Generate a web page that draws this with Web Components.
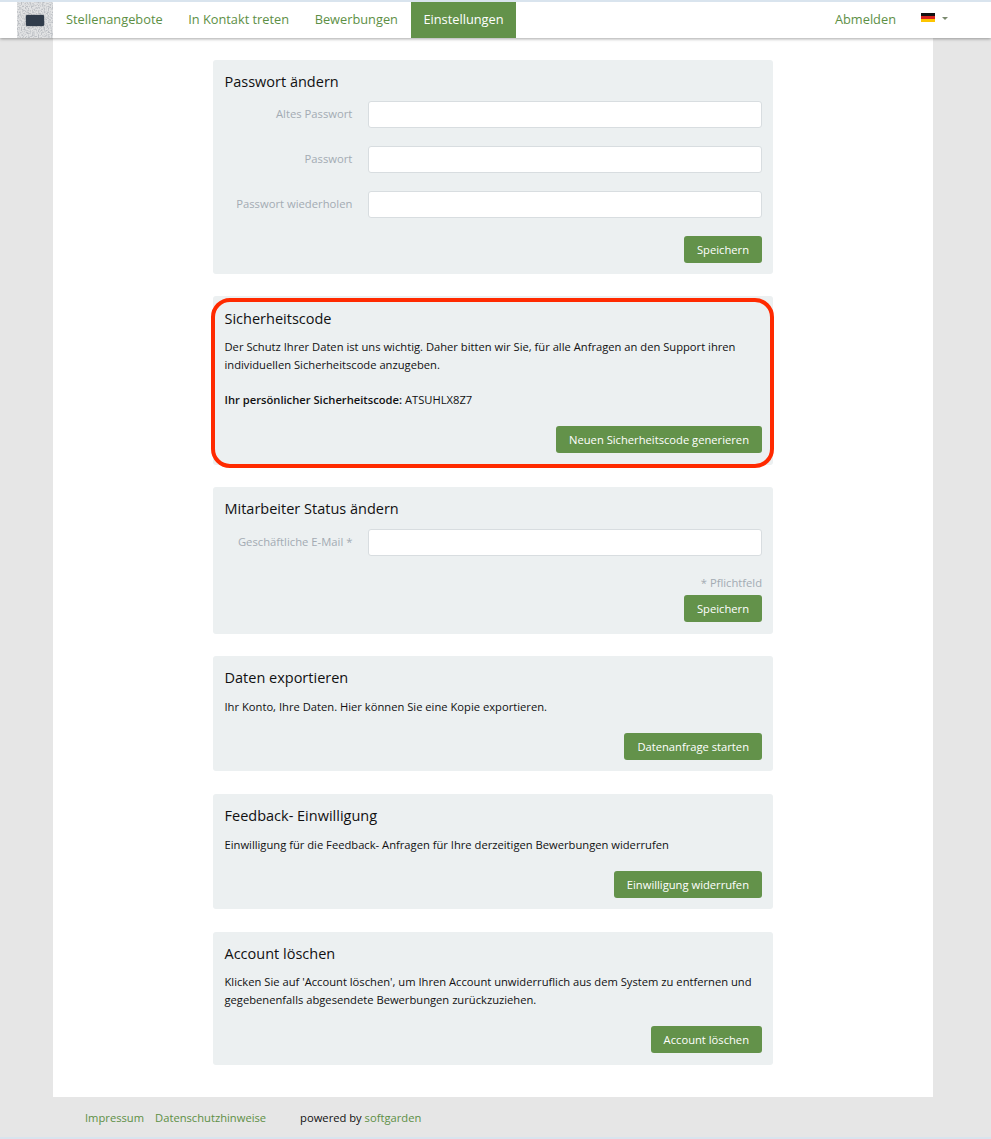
<!DOCTYPE html>
<html lang="de">
<head>
<meta charset="utf-8">
<title>Einstellungen</title>
<style>
  html, body { margin: 0; padding: 0; }
  body { background: #e6e6e6; font-family: "Open Sans", sans-serif; font-size: 11px; color: #111; }
</style>
</head>
<body>
<sg-app>
  <sg-header slot="header"></sg-header>

  <sg-card title="Passwort ändern" style="height:214px;padding-bottom:11px">
    <sg-field label="Altes Passwort"></sg-field>
    <sg-field label="Passwort"></sg-field>
    <sg-field label="Passwort wiederholen"></sg-field>
    <sg-button slot="action">Speichern</sg-button>
  </sg-card>

  <sg-card title="Sicherheitscode" highlight style="height:169px;--title-shift:1px">
    <p>Der Schutz Ihrer Daten ist uns wichtig. Daher bitten wir Sie, für alle Anfragen an den Support ihren individuellen Sicherheitscode anzugeben.</p>
    <p style="margin-top:17px"><b>Ihr persönlicher Sicherheitscode:</b> ATSUHLX8Z7</p>
    <sg-button slot="action">Neuen Sicherheitscode generieren</sg-button>
  </sg-card>

  <sg-card title="Mitarbeiter Status ändern" style="height:147px">
    <sg-field label="Geschäftliche E-Mail *" style="margin-top:1px"></sg-field>
    <sg-button slot="action" note="* Pflichtfeld">Speichern</sg-button>
  </sg-card>

  <sg-card title="Daten exportieren" style="height:115px;padding-bottom:11px">
    <p>Ihr Konto, Ihre Daten. Hier können Sie eine Kopie exportieren.</p>
    <sg-button slot="action">Datenanfrage starten</sg-button>
  </sg-card>

  <sg-card title="Feedback- Einwilligung" style="height:115px;margin-top:1px;padding-bottom:11px">
    <p>Einwilligung für die Feedback- Anfragen für Ihre derzeitigen Bewerbungen widerrufen</p>
    <sg-button slot="action">Einwilligung widerrufen</sg-button>
  </sg-card>

  <sg-card title="Account löschen" style="height:133px;margin-top:1px">
    <p style="top:0">Klicken Sie auf 'Account löschen', um Ihren Account unwiderruflich aus dem System zu entfernen und gegebenenfalls abgesendete Bewerbungen zurückzuziehen.</p>
    <sg-button slot="action">Account löschen</sg-button>
  </sg-card>

  <sg-footer slot="footer"></sg-footer>
</sg-app>

<script>
const Colors = {
    green: '#63924a',
    link: '#5d8f45',
    card: '#ecf0f1',
    page: '#e6e6e6',
    stripe: '#d9e4ee',
    label: '#a3abb3',
};

class App extends HTMLElement {
    constructor() {
        super();
        this.attachShadow({ mode: 'open' }).innerHTML = `
          <style>
            :host { display: flex; flex-direction: column; min-height: 1139px; background: ${Colors.page}; }
            main {
              width: 880px; margin-left: 53px; background: #fff; box-sizing: border-box;
              padding: 22px 160px 32px; display: flex; flex-direction: column; gap: 22px;
            }
          </style>
          <slot name="header"></slot>
          <main><slot></slot></main>
          <slot name="footer"></slot>
        `;
    }
}

class Header extends HTMLElement {
    constructor() {
        super();
        this.attachShadow({ mode: 'open' }).innerHTML = `
          <style>
            :host {
              display: flex; height: 36px; background: #fff; border-top: 2px solid ${Colors.stripe};
              box-shadow: 0 1px 3px rgba(0,0,0,.35); position: relative; z-index: 2;
              padding-left: 17px; font-size: 12.8px;
            }
            .logo {
              width: 36px; height: 36px; display: flex; align-items: center; justify-content: center;
              position: relative; background: #e2e3e4; overflow: hidden;
            }
            .logo svg { position: absolute; inset: 0; }
            .chip {
              position: relative; width: 18px; height: 11px; background: #303c4b; border-radius: 1px;
              box-shadow: 0 0 2px rgba(40,50,60,.6);
            }
            nav { display: flex; flex: 1; margin-left: 0.25px; }
            a { color: ${Colors.link}; text-decoration: none; padding: 0 12.75px; line-height: 35px; display: block; }
            a.active { background: ${Colors.green}; color: #fff; }
            .right { display: flex; align-items: flex-start; }
            .logout { padding: 0; margin-right: 25px; }
            .flag { display: block; width: 14px; height: 9px; margin-top: 11px; }
            .caret {
              width: 0; height: 0; margin: 15px 43px 0 7px;
              border-top: 3px solid #7a8a6e; border-left: 3px solid transparent; border-right: 3px solid transparent;
            }
          </style>
          <div class="logo">
            <svg width="36" height="36" aria-hidden="true">
              <filter id="grain" x="0" y="0" width="100%" height="100%">
                <feTurbulence type="fractalNoise" baseFrequency="0.7" numOctaves="1" seed="4"/>
                <feColorMatrix type="matrix" values="0 0 0 0 0.5  0 0 0 0 0.52  0 0 0 0 0.55  4 0 0 0 -1.7"/>
              </filter>
              <rect width="36" height="36" filter="url(#grain)"/>
            </svg>
            <div class="chip"></div>
          </div>
          <nav>
            <a href="#">Stellenangebote</a>
            <a href="#">In Kontakt treten</a>
            <a href="#">Bewerbungen</a>
            <a class="active" href="#">Einstellungen</a>
          </nav>
          <div class="right">
            <a class="logout" href="#">Abmelden</a>
            <svg class="flag" viewBox="0 0 14 9" aria-hidden="true">
              <rect width="14" height="3" fill="#111"/>
              <rect y="3" width="14" height="3" fill="#d8231f"/>
              <rect y="6" width="14" height="3" fill="#fdc500"/>
            </svg>
            <span class="caret"></span>
          </div>
        `;
    }
}

class Card extends HTMLElement {
    constructor() {
        super();
        this.attachShadow({ mode: 'open' }).innerHTML = `
          <style>
            :host {
              display: flex; flex-direction: column; position: relative; box-sizing: border-box;
              background: ${Colors.card}; border-radius: 3px; padding: 12px 11px 12px 11.5px;
            }
            h2 {
              margin: 0; font-size: 14.5px; line-height: 20px; font-weight: 400; color: #111;
              position: relative; top: var(--title-shift, 0);
            }
            .body { flex: 1; margin-top: 9px; }
            .action { display: flex; justify-content: flex-end; }
            ::slotted(p) { margin: 0 0 16px; font-size: 11.2px; line-height: 18px; color: #111; position: relative; top: 1px; }
            .ring {
              display: none; position: absolute; left: -2px; right: -1px; top: 2px; bottom: -3px;
              border: 4px solid #ff2a00; border-radius: 19px; pointer-events: none;
            }
            :host([highlight]) .ring { display: block; }
          </style>
          <h2></h2>
          <div class="body"><slot></slot></div>
          <div class="action"><slot name="action"></slot></div>
          <div class="ring"></div>
        `;
        this.shadowRoot.querySelector('h2').textContent = this.getAttribute('title');
        this.removeAttribute('title');
    }
    connectedCallback() {
        this.querySelectorAll('b').forEach((b) => { b.style.fontWeight = 600; });
    }
}

class Field extends HTMLElement {
    constructor() {
        super();
        this.attachShadow({ mode: 'open' }).innerHTML = `
          <style>
            :host { display: flex; align-items: flex-start; margin-bottom: 18px; }
            label { width: 128px; text-align: right; font-size: 11.25px; line-height: 26px; color: ${Colors.label}; white-space: nowrap; }
            input {
              margin-left: 16px; width: 394px; height: 27px; box-sizing: border-box; padding: 0 8px;
              border: 1px solid #d8dde0; border-radius: 3px; background: #fff; outline: none; display: block;
            }
          </style>
          <label></label><input type="text">
        `;
        this.shadowRoot.querySelector('label').textContent = this.getAttribute('label');
    }
}

class Button extends HTMLElement {
    constructor() {
        super();
        this.attachShadow({ mode: 'open' }).innerHTML = `
          <style>
            :host { display: flex; flex-direction: column; align-items: flex-end; }
            .note { font-size: 11.2px; line-height: 18px; margin-bottom: 3px; color: ${Colors.label}; }
            button {
              height: 27px; padding: 0 13px; border: 0; border-radius: 3px; background: ${Colors.green};
              color: #fff; font: 500 11.2px "Open Sans", sans-serif; white-space: nowrap;
            }
          </style>
          <div class="note"></div>
          <button><slot></slot></button>
        `;
        const note = this.shadowRoot.querySelector('.note');
        if (this.hasAttribute('note')) {
            note.textContent = this.getAttribute('note');
        } else {
            note.remove();
        }
    }
}

class Footer extends HTMLElement {
    constructor() {
        super();
        this.attachShadow({ mode: 'open' }).innerHTML = `
          <style>
            :host {
              display: flex; flex: 1; box-sizing: border-box; padding: 12px 0 0 85px;
              font-size: 11.2px; line-height: 18px; color: #111; border-bottom: 2px solid ${Colors.stripe};
            }
            a { color: ${Colors.link}; text-decoration: none; }
            .links { display: flex; gap: 11px; margin-right: 34px; }
          </style>
          <div class="links"><a href="#">Impressum</a><a href="#">Datenschutzhinweise</a></div>
          <div>powered by <a href="#">softgarden</a></div>
        `;
    }
}

customElements.define('sg-app', App);
customElements.define('sg-header', Header);
customElements.define('sg-card', Card);
customElements.define('sg-field', Field);
customElements.define('sg-button', Button);
customElements.define('sg-footer', Footer);
</script>
</body>
</html>
